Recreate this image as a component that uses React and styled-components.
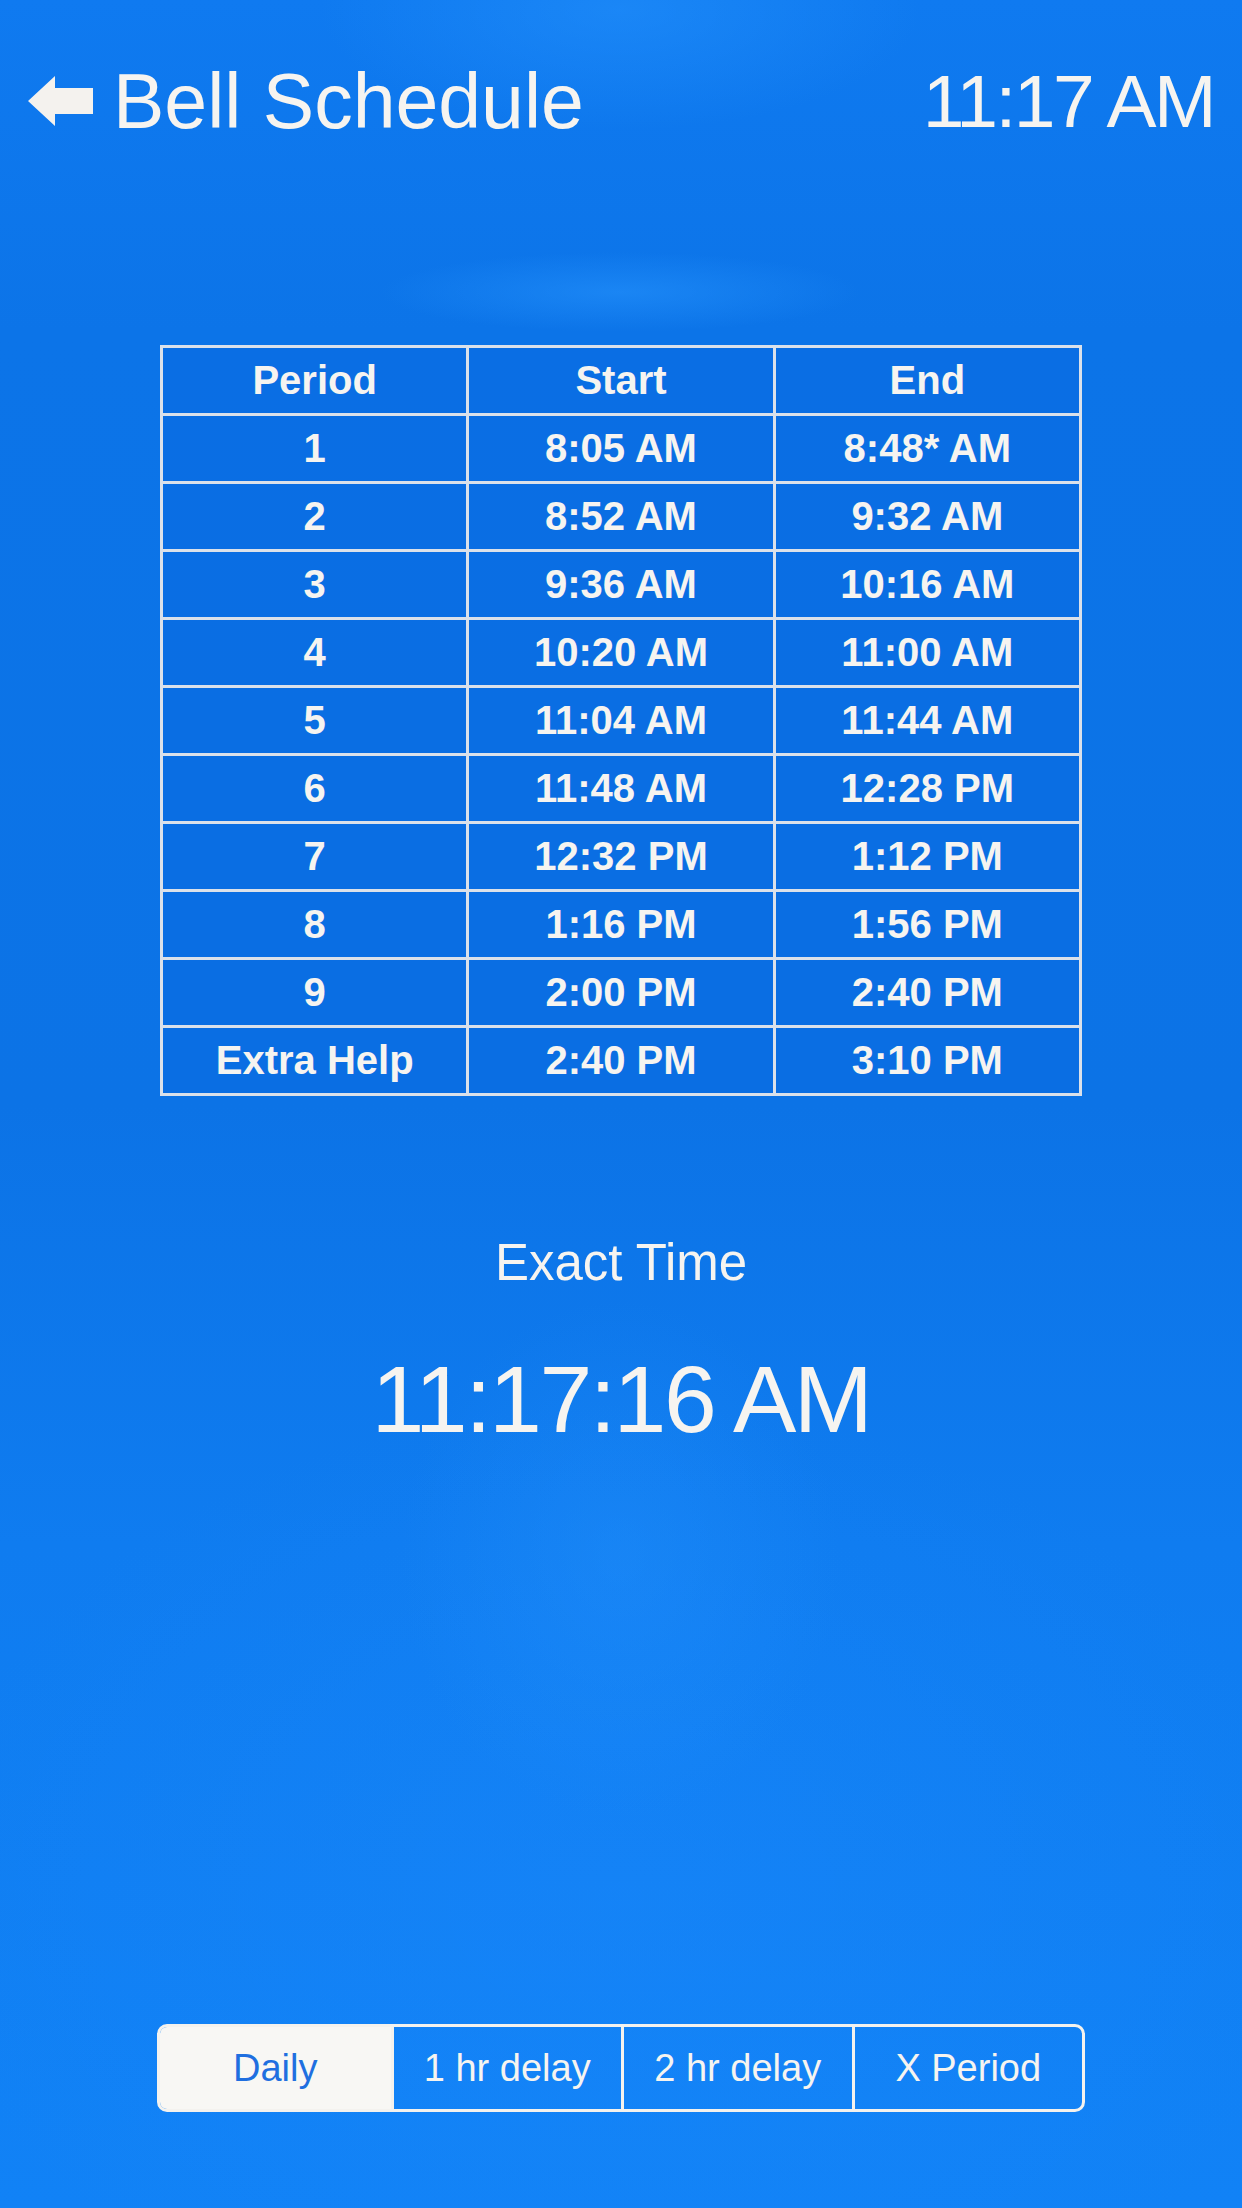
import React from 'react';
import styled, { createGlobalStyle } from 'styled-components';

const GlobalStyle = createGlobalStyle`
  html, body {
    margin: 0;
    padding: 0;
    background: #0d77eb;
  }
  * { box-sizing: border-box; }
`;

const rows = [
  ['1', '8:05 AM', '8:48* AM'],
  ['2', '8:52 AM', '9:32 AM'],
  ['3', '9:36 AM', '10:16 AM'],
  ['4', '10:20 AM', '11:00 AM'],
  ['5', '11:04 AM', '11:44 AM'],
  ['6', '11:48 AM', '12:28 PM'],
  ['7', '12:32 PM', '1:12 PM'],
  ['8', '1:16 PM', '1:56 PM'],
  ['9', '2:00 PM', '2:40 PM'],
  ['Extra Help', '2:40 PM', '3:10 PM'],
];

const tabs = ['Daily', '1 hr delay', '2 hr delay', 'X Period'];

const BackArrow = () => (
  <svg width="65" height="50" viewBox="0 0 65 50">
    <polygon points="0,25 27,0 27,12 65,12 65,38 27,38 27,50" fill="#f4f2ee" />
  </svg>
);

const App = () => {
  return (
    <Page>
      <GlobalStyle />
      <Header>
        <BackButton>
          <BackArrow />
          <Title>Bell Schedule</Title>
        </BackButton>
        <Clock>11:17 AM</Clock>
      </Header>

      <Schedule>
        <thead>
          <tr>
            <Th>Period</Th>
            <Th>Start</Th>
            <Th>End</Th>
          </tr>
        </thead>
        <tbody>
          {rows.map((r) => (
            <tr key={r[0]}>
              <Td>{r[0]}</Td>
              <Td>{r[1]}</Td>
              <Td>{r[2]}</Td>
            </tr>
          ))}
        </tbody>
      </Schedule>

      <ExactLabel>Exact Time</ExactLabel>
      <ExactTime>11:17:16 AM</ExactTime>

      <Segmented>
        {tabs.map((t, i) => (
          <Segment key={t} active={i === 0}>{t}</Segment>
        ))}
      </Segmented>
    </Page>
  );
};

export default App;

const Page = styled.div`
  min-height: 2208px;
  display: flex;
  flex-direction: column;
  align-items: center;
  font-family: "Liberation Sans", Arial, sans-serif;
  color: #f6f4f0;
  background:
    radial-gradient(ellipse 240px 40px at 620px 292px, rgba(40, 150, 255, 0.5), transparent),
    radial-gradient(ellipse 300px 120px at 620px 10px, rgba(40, 150, 255, 0.45), transparent),
    radial-gradient(ellipse 220px 260px at 620px 1560px, rgba(40, 150, 255, 0.3), transparent),
    radial-gradient(ellipse 700px 500px at 620px 1900px, rgba(30, 140, 255, 0.3), transparent),
    linear-gradient(180deg, #0f7af0 0%, #0c74e8 15%, #0c73e6 50%, #0f7cf0 70%, #1182f6 100%);
`;

const Header = styled.header`
  width: 100%;
  height: 139px;
  padding: 63px 28px 0 28px;
  display: flex;
  justify-content: space-between;
  align-items: flex-start;
`;

const BackButton = styled.div`
  display: flex;
  align-items: center;
  gap: 20px;
  height: 76px;
`;

const Title = styled.h1`
  margin: 0;
  font-size: 77px;
  line-height: 76px;
  font-weight: 400;
`;

const Clock = styled.div`
  font-size: 75px;
  line-height: 76px;
  letter-spacing: -2.5px;
`;

const Schedule = styled.table`
  margin-top: 206px;
  width: 922px;
  border-collapse: collapse;
  border: 3px solid #dbe1ea;
  table-layout: fixed;
`;

const Th = styled.th`
  height: 68px;
  padding: 0;
  border: 3px solid #dbe1ea;
  font-size: 40px;
  font-weight: 700;
  text-align: center;
  color: #f6f4f0;
  background: rgba(8, 100, 220, 0.35);
`;

const Td = styled.td`
  height: 68px;
  padding: 0;
  border: 3px solid #dbe1ea;
  font-size: 40px;
  font-weight: 700;
  text-align: center;
  color: #f6f4f0;
  background: rgba(8, 100, 220, 0.35);
`;

const ExactLabel = styled.div`
  margin-top: 142px;
  font-size: 51px;
  line-height: 50px;
`;

const ExactTime = styled.div`
  margin-top: 64px;
  font-size: 95px;
  line-height: 94px;
  letter-spacing: -2.5px;
`;

const Segmented = styled.div`
  margin-top: auto;
  margin-bottom: 96px;
  width: 928px;
  height: 88px;
  display: grid;
  grid-template-columns: repeat(4, 1fr);
  border: 3px solid #f4f2ee;
  border-radius: 10px;
  overflow: hidden;
`;

const Segment = styled.div`
  display: flex;
  align-items: center;
  justify-content: center;
  font-size: 38px;
  background: ${(p) => (p.active ? '#f8f7f4' : 'transparent')};
  color: ${(p) => (p.active ? '#1f6fe0' : '#f6f4f0')};
  & + & {
    border-left: 3px solid #f4f2ee;
  }
`;
